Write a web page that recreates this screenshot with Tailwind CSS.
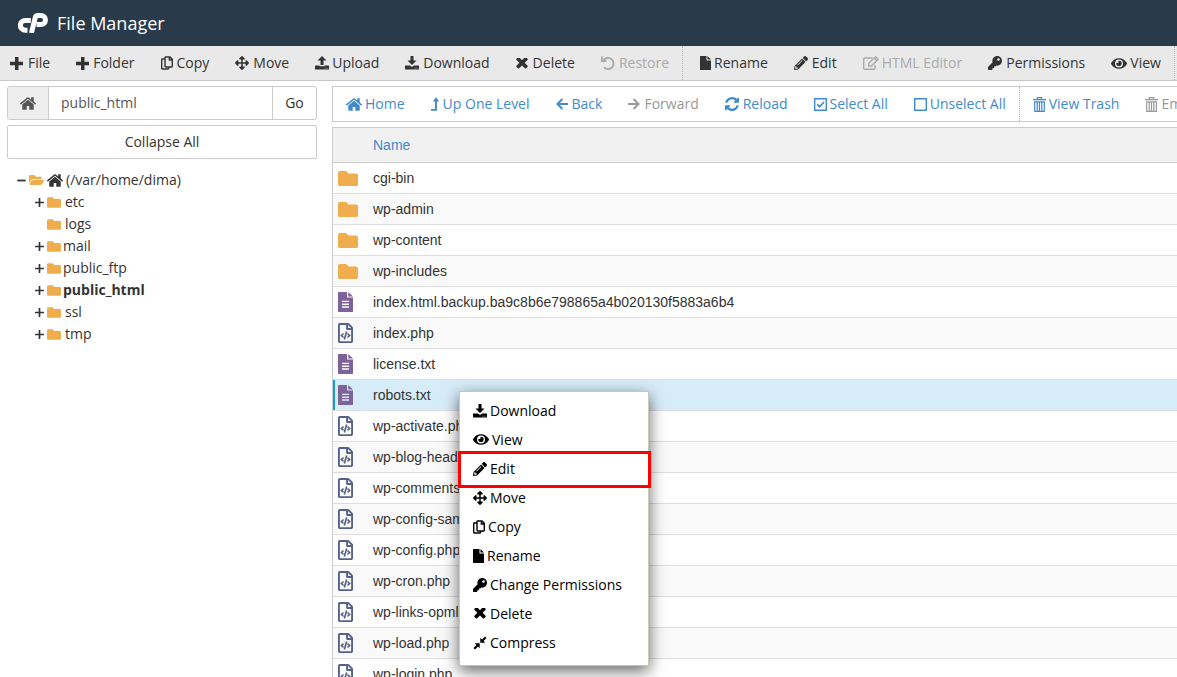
<!DOCTYPE html>
<html lang="en">
  <head>
    <meta charset="UTF-8" />
    <title>File Manager</title>
    <script src="https://cdn.jsdelivr.net/npm/@tailwindcss/browser@4"></script>
  </head>
  <body
    class="h-screen overflow-hidden bg-white font-['Open_Sans',sans-serif] text-sm text-[#333]"
  >
    <!-- icons -->
    <svg class="hidden">
      <symbol id="plus" viewBox="0 0 13 13">
        <path d="M5 0h3.500v4.800H13v3.400H8.500V13H5V8.200H0V4.800h5z" />
      </symbol>
      <symbol id="tree-plus" viewBox="0 0 9 9">
        <path d="M4.500.700v7.600M.700 4.500h7.600" fill="none" stroke="currentColor" stroke-width="1.700" stroke-linecap="round" />
      </symbol>
      <symbol id="tree-minus" viewBox="0 0 9 9">
        <path d="M.300 4.500h8.400" fill="none" stroke="currentColor" stroke-width="1.800" />
      </symbol>
      <symbol id="copy" viewBox="0 0 12 14">
        <path d="M4.700 1H9l2.300 2.400v6.900q0 .700-.700.700H4.700q-.700 0-.700-.700V1.700Q4 1 4.700 1zM8.400 1v3h2.900M4 3H1.400q-.700 0-.700.700v8.600q0 .700.700.700h5.500q.700 0 .700-.700V11" fill="none" stroke="currentColor" stroke-width="1.400" />
      </symbol>
      <symbol id="move" viewBox="0 0 512 512">
        <path d="M352.201 425.775l-79.196 79.196c-9.373 9.373-24.568 9.373-33.941 0l-79.196-79.196c-15.119-15.119-4.411-40.971 16.971-40.970h51.162L228 284H127.196v51.162c0 21.382-25.851 32.090-40.971 16.971L7.029 272.937c-9.373-9.373-9.373-24.569 0-33.941L86.225 159.800c15.119-15.119 40.971-4.411 40.971 16.971V228H228V127.196h-51.230c-21.382 0-32.090-25.851-16.971-40.971l79.196-79.196c9.373-9.373 24.568-9.373 33.941 0l79.196 79.196c15.119 15.119 4.411 40.971-16.971 40.971h-51.162V228h100.804v-51.162c0-21.382 25.851-32.090 40.970-16.971l79.196 79.196c9.373 9.373 9.373 24.569 0 33.941L425.773 352.200c-15.119 15.119-40.971 4.411-40.970-16.971V284H284v100.804h51.230c21.382 0 32.090 25.851 16.971 40.971z" />
      </symbol>
      <symbol id="upload" viewBox="0 0 14 14">
        <path d="M7 0l4.500 4.600H8.500V9h-3V4.600h-3z" />
        <path fill-rule="evenodd" d="M.500 9.500h4V10.300h5V9.500h4q.500 0 .500.500v3q0 .500-.500.500H.500Q0 13.500 0 13v-3q0-.500.500-.500zM9.500 11.700v.900h.900v-.900zM11.500 11.700v.900h.900v-.900z" />
      </symbol>
      <symbol id="download" viewBox="0 0 14 14">
        <path d="M5.500 0h3v4.400h3L7 9 2.500 4.400h3z" />
        <path fill-rule="evenodd" d="M.500 9.500H5l2 1.400 2-1.400h4.500q.500 0 .500.500v3q0 .500-.500.500H.500Q0 13.500 0 13v-3q0-.500.500-.500zM9.500 11.700v.900h.900v-.900zM11.500 11.700v.900h.900v-.900z" />
      </symbol>
      <symbol id="delete" viewBox="300 465 1192 1130">
        <path d="M1490 1322q0 40-28 68l-136 136q-28 28-68 28t-68-28l-294-294-294 294q-28 28-68 28t-68-28l-136-136q-28-28-28-68t28-68l294-294-294-294q-28-28-28-68t28-68l136-136q28-28 68-28t68 28l294 294 294-294q28-28 68-28t68 28l136 136q28 28 28 68t-28 68l-294 294 294 294q28 28 28 68z" />
      </symbol>
      <symbol id="restore" viewBox="0 0 14 14">
        <path d="M2.200 4.500A5.600 5.600 0 1 1 3 11.400" fill="none" stroke="currentColor" stroke-width="1.900" />
        <path d="M0 .500l1.800 0V4h3.700v1.900H0z" />
      </symbol>
      <symbol id="file" viewBox="0 0 11 14">
        <path d="M.500 0H6.500v4.500H11v9q0 .500-.500.500H.500Q0 14 0 13.500V.500Q0 0 .500 0zM7.500 0L11 3.500H7.500z" />
      </symbol>
      <symbol id="pencil" viewBox="0 0 512 512">
        <path d="M497.900 142.100l-46.100 46.100c-4.700 4.700-12.300 4.700-17 0l-111-111c-4.700-4.700-4.700-12.300 0-17l46.100-46.100c18.700-18.700 49.100-18.700 67.900 0l60.100 60.100c18.800 18.700 18.800 49.100 0 67.900zM284.200 99.800L21.600 362.400.400 483.900c-2.900 16.400 11.400 30.600 27.800 27.800l121.500-21.300 262.600-262.600c4.700-4.700 4.700-12.300 0-17l-111-111c-4.800-4.700-12.400-4.700-17.100 0zM124.100 339.900c-5.500-5.500-5.500-14.300 0-19.800l154-154c5.500-5.500 14.300-5.500 19.800 0s5.500 14.300 0 19.800l-154 154c-5.500 5.500-14.300 5.500-19.800 0zM88 424h48v36.300l-64.500 11.300-31.100-31.100L51.700 376H88v48z" />
      </symbol>
      <symbol id="html-edit" viewBox="0 0 16 14">
        <path d="M9.500 2H1.700q-1 0-1 1v9.300q0 1 1 1H11q1 0 1-1V9" fill="none" stroke="currentColor" stroke-width="1.400" />
        <path d="M5.700 10V7.300L12.600.700l2.600 2.600L8.400 10zM11.200 2.200l2.500 2.500" fill="none" stroke="currentColor" stroke-width="1.300" />
      </symbol>
      <symbol id="key" viewBox="0 0 512 512">
        <path d="M512 176.001C512 273.203 433.202 352 336 352c-11.220 0-22.190-1.062-32.827-3.069l-24.012 27.014A23.999 23.999 0 0 1 261.223 384H224v40c0 13.255-10.745 24-24 24h-40v40c0 13.255-10.745 24-24 24H24c-13.255 0-24-10.745-24-24v-78.059c0-6.365 2.529-12.470 7.029-16.971l161.802-161.802C163.108 213.814 160 195.271 160 176 160 78.798 238.797.001 335.999 0 433.488-.001 512 78.511 512 176.001zM336 128c0 26.510 21.490 48 48 48s48-21.490 48-48-21.490-48-48-48-48 21.490-48 48z" />
      </symbol>
      <symbol id="eye" viewBox="0 64 576 384">
        <path d="M572.520 241.400C518.290 135.590 410.930 64 288 64S57.680 135.640 3.480 241.410a32.350 32.350 0 0 0 0 29.190C57.710 376.410 165.070 448 288 448s230.320-71.640 284.520-177.410a32.350 32.350 0 0 0 0-29.190zM288 400a144 144 0 1 1 144-144 143.930 143.930 0 0 1-144 144zm0-240a95.310 95.310 0 0 0-25.310 3.790 47.850 47.850 0 0 1-66.900 66.900A95.780 95.780 0 1 0 288 160z" />
      </symbol>
      <symbol id="home" viewBox="90 250 1612 1290">
        <path d="M1472 992v480q0 26-19 45t-45 19h-384v-384h-256v384h-384q-26 0-45-19t-19-45v-480q0-1 .5-3t.5-3l575-474 575 474q1 2 1 6zm223-69l-62 74q-8 9-21 11h-3q-13 0-21-7l-692-577-692 577q-12 8-24 7-13-2-21-11l-62-74q-8-10-7-23.500t11-21.500l719-599q32-26 76-26t76 26l244 204v-195q0-14 9-23t23-9h192q14 0 23 9t9 23v408l219 182q10 8 11 21.500t-7 23.500z" />
      </symbol>
      <symbol id="level-up" viewBox="0 0 8 14">
        <path d="M0 12.900h5V2" fill="none" stroke="currentColor" stroke-width="1.900" />
        <path d="M5 0l3 4.600H2z" />
      </symbol>
      <symbol id="arrow-left" viewBox="0 0 12 12">
        <path d="M12 6H1.500M6.400 1L1.400 6l5 5" fill="none" stroke="currentColor" stroke-width="1.900" />
      </symbol>
      <symbol id="arrow-right" viewBox="0 0 12 12">
        <path d="M0 6h10.500M5.600 1l5 5-5 5" fill="none" stroke="currentColor" stroke-width="1.900" />
      </symbol>
      <symbol id="reload" viewBox="128 128 1536 1536">
        <path d="M1639 1056q0 5-1 7-64 268-268 434.500t-478 166.500q-146 0-282.500-55t-243.500-157l-129 129q-19 19-45 19t-45-19-19-45v-448q0-26 19-45t45-19h448q26 0 45 19t19 45-19 45l-137 137q71 66 161 102t187 36q134 0 250-65t186-179q11-17 53-117 8-23 30-23h192q13 0 22.500 9.500t9.500 22.500zm25-800v448q0 26-19 45t-45 19h-448q-26 0-45-19t-19-45 19-45l138-138q-148-137-349-137-134 0-250 65t-186 179q-11 17-53 117-8 23-30 23h-199q-13 0-22.500-9.500t-9.500-22.500v-7q65-268 270-434.500t480-166.500q146 0 284 55.500t245 156.500l130-129q19-19 45-19t45 19 19 45z" />
      </symbol>
      <symbol id="checked" viewBox="0 0 13 13">
        <path d="M.700.700h11.600v11.600H.700z" fill="none" stroke="currentColor" stroke-width="1.400" />
        <path d="M3.200 6.300l2.400 2.500 4.400-4.800" fill="none" stroke="currentColor" stroke-width="1.700" />
      </symbol>
      <symbol id="unchecked" viewBox="0 0 13 13">
        <path d="M.700.700h11.600v11.600H.700z" fill="none" stroke="currentColor" stroke-width="1.400" />
      </symbol>
      <symbol id="trash" viewBox="0 0 13 15">
        <path d="M0 2.700h13M4.300 2.500V.600h4.400v1.900M1.700 4.800h9.600v9.500H1.700zM4.200 5v9M6.500 5v9M8.800 5v9" fill="none" stroke="currentColor" stroke-width="1.200" />
      </symbol>
      <symbol id="compress" viewBox="0 0 14 14">
        <path d="M7.300 1.700v5h5l-1.700-1.700L13.500 2 12 .500 9 3.400zM6.700 12.300v-5h-5l1.700 1.700L.500 12 2 13.500l3-2.900z" />
      </symbol>
      <symbol id="folder" viewBox="0 64 512 384">
        <path d="M464 128H272l-64-64H48C21.490 64 0 85.490 0 112v288c0 26.510 21.490 48 48 48h416c26.510 0 48-21.490 48-48V176c0-26.510-21.490-48-48-48z" />
      </symbol>
      <symbol id="folder-open" viewBox="0 64 576 384">
        <path d="M572.694 292.093L500.270 416.248A63.997 63.997 0 0 1 444.989 448H45.025c-18.523 0-30.064-20.093-20.731-36.093l72.424-124.155A64 64 0 0 1 152 256h399.964c18.523 0 30.064 20.093 20.730 36.093zM152 224h328v-48c0-26.510-21.490-48-48-48H272l-64-64H48C21.490 64 0 85.490 0 112v278.046l69.077-118.418C86.214 242.250 117.989 224 152 224z" />
      </symbol>
      <symbol id="file-text" viewBox="0 0 15 20">
        <path fill-rule="evenodd" d="M.700 0H9v5.500h6v13.800q0 .700-.700.700H.700Q0 20 0 19.300V.700Q0 0 .700 0zM10.300 0L15 4.500h-4.700zM4 8.700v1.400h7V8.700zM4 11.500v1.400h7v-1.400zM4 14.300v1.400h7v-1.400z" />
      </symbol>
      <symbol id="file-code" viewBox="0 0 384 512">
        <path d="M149.900 349.100l-.2-.2-32.800-28.900 32.800-28.900c3.600-3.200 4-8.800.800-12.400l-.2-.2-17.400-18.600c-3.400-3.600-9-3.700-12.400-.4l-57.700 54.100c-3.700 3.500-3.700 9.400 0 12.800l57.700 54.100c1.600 1.500 3.800 2.400 6 2.400 2.400 0 4.800-1 6.400-2.800l17.400-18.600c3.300-3.500 3.100-9.100-.4-12.400zm220-251.200L286 14C277 5 264.800-.1 252.100-.1H48C21.500 0 0 21.500 0 48v416c0 26.500 21.500 48 48 48h288c26.500 0 48-21.500 48-48V131.900c0-12.700-5.100-25-14.100-34zM256 51.900l76.100 76.100H256zM336 464H48V48h160v104c0 13.300 10.700 24 24 24h104zM209.600 214c-4.700-1.400-9.500 1.300-10.900 6L144 408.100c-1.400 4.700 1.300 9.600 6 10.900l24.400 7.100c4.700 1.400 9.600-1.400 10.900-6L240 231.900c1.400-4.700-1.300-9.600-6-10.900zm24.500 76.900l.2.2 32.800 28.900-32.800 28.900c-3.600 3.200-4 8.800-.8 12.400l.2.2 17.400 18.600c3.300 3.500 8.900 3.700 12.400.4l57.700-54.100c3.700-3.500 3.700-9.400 0-12.800l-57.700-54.100c-3.500-3.300-9.100-3.200-12.400.4l-17.400 18.600c-3.300 3.500-3.100 9.100.4 12.400z" />
      </symbol>
    </svg>

    <header class="flex h-[46px] items-center gap-[9px] bg-[#293a4a] px-[18px] text-white">
      <svg class="h-5 w-[30px]" viewBox="0 0 30 20" fill="none" stroke="currentColor">
        <path d="M12.800 7.400H7.300a4.700 4.700 0 0 0 0 9.900h2.200" stroke-width="5" />
        <path d="M13.400 20L17.300 4.300Q17.800 2.500 19.600 2.500H23a4.400 4.400 0 0 1 0 9h-4.500" stroke-width="5" />
      </svg>
      <h1 class="text-lg">File Manager</h1>
    </header>

    <!-- main toolbar -->
    <ul class="flex h-[35px] border-b border-[#c3c8cc] bg-[#e9e9e9] whitespace-nowrap">
      <li class="flex"><button class="flex items-center gap-[5px] pr-[13px] pl-[10px]"><svg class="size-[13px] fill-current"><use href="#plus" /></svg>File</button></li>
      <li class="flex"><button class="flex items-center gap-1 px-[13px]"><svg class="size-[13px] fill-current"><use href="#plus" /></svg>Folder</button></li>
      <li class="flex"><button class="flex items-center gap-1 px-[13px]"><svg class="h-[14px] w-3 fill-current"><use href="#copy" /></svg>Copy</button></li>
      <li class="flex"><button class="flex items-center gap-1 px-[13px]"><svg class="size-[14px] fill-current"><use href="#move" /></svg>Move</button></li>
      <li class="flex"><button class="flex items-center gap-[3px] px-[13px]"><svg class="size-[14px] fill-current"><use href="#upload" /></svg>Upload</button></li>
      <li class="flex"><button class="flex items-center gap-1 px-[13px]"><svg class="size-[14px] fill-current"><use href="#download" /></svg>Download</button></li>
      <li class="flex"><button class="flex items-center gap-[5px] px-[13px]"><svg class="h-[11px] w-3 fill-current"><use href="#delete" /></svg>Delete</button></li>
      <li class="flex border-r border-dotted border-[#bbb]"><button class="flex items-center gap-1 px-[13px] text-[#aaa]" disabled><svg class="size-[14px] fill-current"><use href="#restore" /></svg>Restore</button></li>
      <li class="flex pl-1"><button class="flex items-center gap-[3px] px-[13px]"><svg class="h-[14px] w-[11px] fill-current"><use href="#file" /></svg>Rename</button></li>
      <li class="flex"><button class="flex items-center gap-1 px-[13px]"><svg class="size-[14px] fill-current"><use href="#pencil" /></svg>Edit</button></li>
      <li class="flex"><button class="flex items-center gap-[3px] px-[13px] text-[#aaa]" disabled><svg class="h-[14px] w-4 fill-current"><use href="#html-edit" /></svg>HTML Editor</button></li>
      <li class="flex"><button class="flex items-center gap-1 px-[13px]"><svg class="size-[14px] fill-current"><use href="#key" /></svg>Permissions</button></li>
      <li class="flex border-r border-dotted border-[#bbb]"><button class="flex items-center gap-[3px] px-[13px]"><svg class="h-[11px] w-4 fill-current"><use href="#eye" /></svg>View</button></li>
    </ul>

    <div class="flex items-start gap-[15px] pt-[5px] pl-[7px]">
      <!-- directory tree -->
      <aside class="w-[310px] shrink-0">
        <form class="flex h-[34px] rounded-[3px] border border-[#ccc]">
          <label for="location" class="flex w-[41px] items-center justify-center rounded-l-[2px] border-r border-[#ccc] bg-[#eee] text-[#555]" aria-label="Location"><svg class="h-[13px] w-4 fill-current"><use href="#home" /></svg></label>
          <input id="location" type="text" value="public_html" class="min-w-0 flex-1 px-3 text-[#555] outline-none" />
          <button type="button" class="w-11 border-l border-[#ccc]">Go</button>
        </form>
        <button class="mt-[5px] h-[34px] w-full rounded-[2px] border border-[#ccc]">Collapse All</button>

        <ul class="mt-[10px] pl-[10px] leading-[22px]">
          <li>
            <div class="flex items-center gap-[3px]">
              <svg class="size-[9px]"><use href="#tree-minus" /></svg>
              <svg class="h-[10px] w-[15px] fill-[#f0ad4e]"><use href="#folder-open" /></svg>
              <svg class="h-[13px] w-4 fill-current"><use href="#home" /></svg>
              <span>(/var/home/dima)</span>
            </div>
            <ul class="pl-[18px]">
              <li class="flex items-center gap-[3px]"><svg class="size-[9px]"><use href="#tree-plus" /></svg><svg class="h-[11px] w-[14px] fill-[#f0ad4e]"><use href="#folder" /></svg><span class="pl-px">etc</span></li>
              <li class="flex items-center gap-[3px] pl-3"><svg class="h-[11px] w-[14px] fill-[#f0ad4e]"><use href="#folder" /></svg><span class="pl-px">logs</span></li>
              <li class="flex items-center gap-[3px]"><svg class="size-[9px]"><use href="#tree-plus" /></svg><svg class="mr-[-1px] h-[11px] w-[14px] fill-[#f0ad4e]"><use href="#folder" /></svg>mail</li>
              <li class="flex items-center gap-[3px]"><svg class="size-[9px]"><use href="#tree-plus" /></svg><svg class="mr-[-1px] h-[11px] w-[14px] fill-[#f0ad4e]"><use href="#folder" /></svg>public_ftp</li>
              <li class="flex items-center gap-[3px] font-bold"><svg class="size-[9px]"><use href="#tree-plus" /></svg><svg class="mr-[-1px] h-[11px] w-[14px] fill-[#f0ad4e]"><use href="#folder" /></svg>public_html</li>
              <li class="flex items-center gap-[3px]"><svg class="size-[9px]"><use href="#tree-plus" /></svg><svg class="h-[11px] w-[14px] fill-[#f0ad4e]"><use href="#folder" /></svg><span class="pl-px">ssl</span></li>
              <li class="flex items-center gap-[3px]"><svg class="size-[9px]"><use href="#tree-plus" /></svg><svg class="h-[11px] w-[14px] fill-[#f0ad4e]"><use href="#folder" /></svg><span class="pl-px">tmp</span></li>
            </ul>
          </li>
        </ul>
      </aside>

      <main class="min-w-0 flex-1">
        <!-- navigation bar -->
        <ul class="flex h-9 overflow-hidden border border-r-0 border-[#ccc] whitespace-nowrap text-[#428bca]">
          <li class="flex"><button class="flex items-center gap-[3px] px-[13px]"><svg class="h-[13px] w-4 fill-current"><use href="#home" /></svg>Home</button></li>
          <li class="flex"><button class="flex items-center gap-1 px-[13px]"><svg class="h-[14px] w-2 fill-current"><use href="#level-up" /></svg>Up One Level</button></li>
          <li class="flex"><button class="flex items-center gap-1 px-[13px]"><svg class="size-3 fill-current"><use href="#arrow-left" /></svg>Back</button></li>
          <li class="flex"><button class="flex items-center gap-1 px-[13px] text-[#999]" disabled><svg class="size-3 fill-current"><use href="#arrow-right" /></svg>Forward</button></li>
          <li class="flex"><button class="flex items-center gap-1 px-[13px]"><svg class="size-[14px] fill-current"><use href="#reload" /></svg>Reload</button></li>
          <li class="flex"><button class="flex items-center gap-[3px] px-[13px]"><svg class="size-[13px] fill-current"><use href="#checked" /></svg>Select All</button></li>
          <li class="flex border-r border-dotted border-[#bbb]"><button class="flex items-center gap-[3px] px-[13px]"><svg class="size-[13px] fill-current"><use href="#unchecked" /></svg>Unselect All</button></li>
          <li class="flex"><button class="flex items-center gap-[3px] px-[13px]"><svg class="h-[15px] w-[13px] fill-current"><use href="#trash" /></svg>View Trash</button></li>
          <li class="flex"><button class="flex items-center gap-[3px] px-[13px] text-[#999]" disabled><svg class="h-[15px] w-[13px] fill-current"><use href="#trash" /></svg>Empty Trash</button></li>
        </ul>

        <!-- file list -->
        <table class="mt-[5px] w-full border-separate border-spacing-0 border-t border-l border-[#ccc] text-left font-['Liberation_Sans',sans-serif]">
          <thead>
            <tr class="h-[35px] bg-[#f1f1f1] text-[#428bca]">
              <th class="w-10 border-b border-[#ccc]"></th>
              <th class="border-b border-[#ccc] font-normal">Name</th>
            </tr>
          </thead>
          <tbody class="[&_td]:border-b [&_td]:border-[#ddd] [&_td:first-child]:pl-[5px] [&_tr]:h-[31px] [&_tr:nth-child(even)]:bg-[#f9f9f9]">
            <tr><td><svg class="h-[15px] w-5 fill-[#f0ad4e]"><use href="#folder" /></svg></td><td>cgi-bin</td></tr>
            <tr><td><svg class="h-[15px] w-5 fill-[#f0ad4e]"><use href="#folder" /></svg></td><td>wp-admin</td></tr>
            <tr><td><svg class="h-[15px] w-5 fill-[#f0ad4e]"><use href="#folder" /></svg></td><td>wp-content</td></tr>
            <tr><td><svg class="h-[15px] w-5 fill-[#f0ad4e]"><use href="#folder" /></svg></td><td>wp-includes</td></tr>
            <tr><td><svg class="h-5 w-[15px] fill-[#7e629a]"><use href="#file-text" /></svg></td><td>index.html.backup.ba9c8b6e798865a4b020130f5883a6b4</td></tr>
            <tr><td><svg class="h-5 w-[15px] fill-[#56618a]"><use href="#file-code" /></svg></td><td>index.php</td></tr>
            <tr><td><svg class="h-5 w-[15px] fill-[#7e629a]"><use href="#file-text" /></svg></td><td>license.txt</td></tr>
            <tr class="bg-[#d7ecf9]!"><td class="shadow-[inset_2px_0_#179bd7]"><svg class="h-5 w-[15px] fill-[#7e629a]"><use href="#file-text" /></svg></td><td>robots.txt</td></tr>
            <tr><td><svg class="h-5 w-[15px] fill-[#56618a]"><use href="#file-code" /></svg></td><td>wp-activate.php</td></tr>
            <tr><td><svg class="h-5 w-[15px] fill-[#56618a]"><use href="#file-code" /></svg></td><td>wp-blog-header.php</td></tr>
            <tr><td><svg class="h-5 w-[15px] fill-[#56618a]"><use href="#file-code" /></svg></td><td>wp-comments-post.php</td></tr>
            <tr><td><svg class="h-5 w-[15px] fill-[#56618a]"><use href="#file-code" /></svg></td><td>wp-config-sample.php</td></tr>
            <tr><td><svg class="h-5 w-[15px] fill-[#56618a]"><use href="#file-code" /></svg></td><td>wp-config.php</td></tr>
            <tr><td><svg class="h-5 w-[15px] fill-[#56618a]"><use href="#file-code" /></svg></td><td>wp-cron.php</td></tr>
            <tr><td><svg class="h-5 w-[15px] fill-[#56618a]"><use href="#file-code" /></svg></td><td>wp-links-opml.php</td></tr>
            <tr><td><svg class="h-5 w-[15px] fill-[#56618a]"><use href="#file-code" /></svg></td><td>wp-load.php</td></tr>
            <tr><td><svg class="h-5 w-[15px] fill-[#56618a]"><use href="#file-code" /></svg></td><td>wp-login.php</td></tr>
          </tbody>
        </table>
      </main>
    </div>

    <!-- context menu -->
    <ul class="absolute top-[391px] left-[459px] w-[190px] border border-[#c9c7ba] bg-white pt-1 pb-2 text-black shadow-[0_5px_15px_rgba(0,0,0,0.6)]">
      <li><button class="flex h-[29px] w-full items-center gap-[3px] px-[13px]"><svg class="size-[14px] fill-current"><use href="#download" /></svg>Download</button></li>
      <li><button class="flex h-[29px] w-full items-center gap-[3px] px-[13px]"><svg class="h-[11px] w-4 fill-current"><use href="#eye" /></svg>View</button></li>
      <li class="relative">
        <button class="flex h-[29px] w-full items-center gap-[3px] px-[13px]"><svg class="size-[14px] fill-current"><use href="#pencil" /></svg>Edit</button>
        <span class="pointer-events-none absolute -top-[3px] -right-[3px] -bottom-[5px] -left-[2px] border-3 border-[#f00]"></span>
      </li>
      <li><button class="flex h-[29px] w-full items-center gap-[3px] px-[13px]"><svg class="size-[14px] fill-current"><use href="#move" /></svg>Move</button></li>
      <li><button class="flex h-[29px] w-full items-center gap-[3px] px-[13px]"><svg class="h-[14px] w-3 fill-current"><use href="#copy" /></svg>Copy</button></li>
      <li><button class="flex h-[29px] w-full items-center gap-[3px] px-[13px]"><svg class="h-[14px] w-[11px] fill-current"><use href="#file" /></svg>Rename</button></li>
      <li><button class="flex h-[29px] w-full items-center gap-[3px] px-[13px]"><svg class="size-[14px] fill-current"><use href="#key" /></svg>Change Permissions</button></li>
      <li><button class="flex h-[29px] w-full items-center gap-[3px] px-[13px]"><svg class="h-[11px] w-[14px] fill-current"><use href="#delete" /></svg>Delete</button></li>
      <li><button class="flex h-[29px] w-full items-center gap-[3px] px-[13px]"><svg class="size-[14px] fill-current"><use href="#compress" /></svg>Compress</button></li>
    </ul>
  </body>
</html>
